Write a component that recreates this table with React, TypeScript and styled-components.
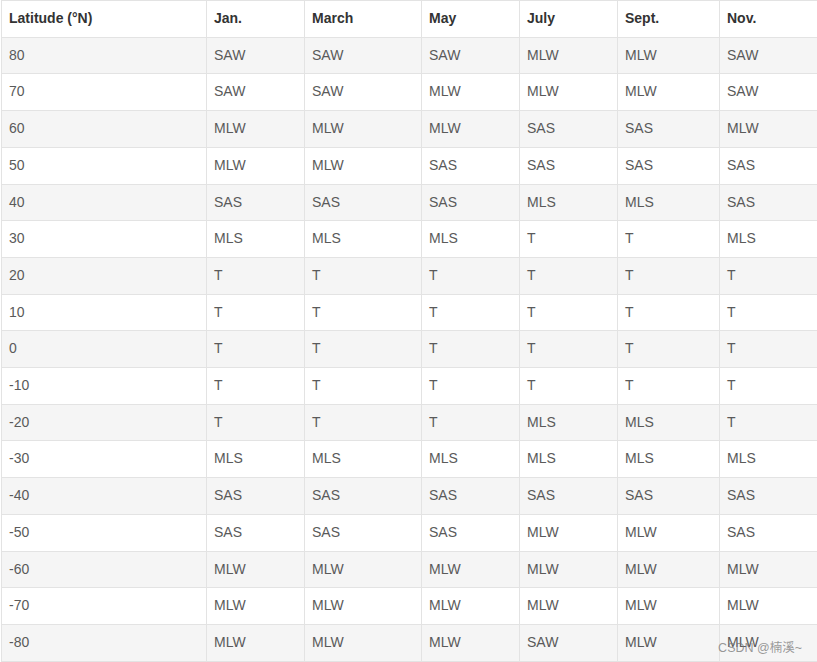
import React from "react";
import styled, { createGlobalStyle } from "styled-components";

const GlobalStyle = createGlobalStyle`
  html, body { margin: 0; padding: 0; background: #fff; overflow: hidden; }
  body { font-family: "Liberation Sans", Arial, sans-serif; }
`;

const Page = styled.div`
  position: relative;
  width: 817px;
  height: 662px;
  overflow: hidden;
  padding: 0 0 0 1px;
  box-sizing: border-box;
`;

const Table = styled.table`
  border-collapse: collapse;
  table-layout: fixed;
  width: 850px;
  font-size: 14px;
  color: #5a5a5a;
`;

const HeadCell = styled.th<{ $w: number }>`
  box-sizing: border-box;
  width: ${(p) => p.$w}px;
  text-align: left;
  font-weight: bold;
  color: #333;
  padding: 8px 7px;
  line-height: 19.7px;
  border: 1px solid #e3e3e3;
  background: #fff;
`;

const Row = styled.tr<{ $striped: boolean }>`
  background: ${(p) => (p.$striped ? "#f5f5f5" : "#fff")};
`;

const Cell = styled.td`
  padding: 8px 7px;
  line-height: 19.7px;
  border: 1px solid #e3e3e3;
  white-space: nowrap;
`;

const Watermark = styled.div`
  position: absolute;
  right: 15px;
  bottom: 6px;
  font-size: 12.5px;
  color: rgba(120, 120, 120, 0.75);
  font-family: "Liberation Sans", "Noto Sans CJK SC", sans-serif;
`;

const headers = ["Latitude (°N)", "Jan.", "March", "May", "July", "Sept.", "Nov."];
const widths = [205, 98, 117, 98, 98, 102, 132];

const rows: string[][] = [
  ["80", "SAW", "SAW", "SAW", "MLW", "MLW", "SAW"],
  ["70", "SAW", "SAW", "MLW", "MLW", "MLW", "SAW"],
  ["60", "MLW", "MLW", "MLW", "SAS", "SAS", "MLW"],
  ["50", "MLW", "MLW", "SAS", "SAS", "SAS", "SAS"],
  ["40", "SAS", "SAS", "SAS", "MLS", "MLS", "SAS"],
  ["30", "MLS", "MLS", "MLS", "T", "T", "MLS"],
  ["20", "T", "T", "T", "T", "T", "T"],
  ["10", "T", "T", "T", "T", "T", "T"],
  ["0", "T", "T", "T", "T", "T", "T"],
  ["-10", "T", "T", "T", "T", "T", "T"],
  ["-20", "T", "T", "T", "MLS", "MLS", "T"],
  ["-30", "MLS", "MLS", "MLS", "MLS", "MLS", "MLS"],
  ["-40", "SAS", "SAS", "SAS", "SAS", "SAS", "SAS"],
  ["-50", "SAS", "SAS", "SAS", "MLW", "MLW", "SAS"],
  ["-60", "MLW", "MLW", "MLW", "MLW", "MLW", "MLW"],
  ["-70", "MLW", "MLW", "MLW", "MLW", "MLW", "MLW"],
  ["-80", "MLW", "MLW", "MLW", "SAW", "MLW", "MLW"],
];

export default function App() {
  return (
    <Page>
      <GlobalStyle />
      <Table>
        <thead>
          <tr>
            {headers.map((h, i) => (
              <HeadCell key={h} $w={widths[i]}>
                {h}
              </HeadCell>
            ))}
          </tr>
        </thead>
        <tbody>
          {rows.map((r, ri) => (
            <Row key={r[0]} $striped={ri % 2 === 0}>
              {r.map((c, ci) => (
                <Cell key={ci}>{c}</Cell>
              ))}
            </Row>
          ))}
        </tbody>
      </Table>
      <Watermark>CSDN @楠溪~</Watermark>
    </Page>
  );
}
